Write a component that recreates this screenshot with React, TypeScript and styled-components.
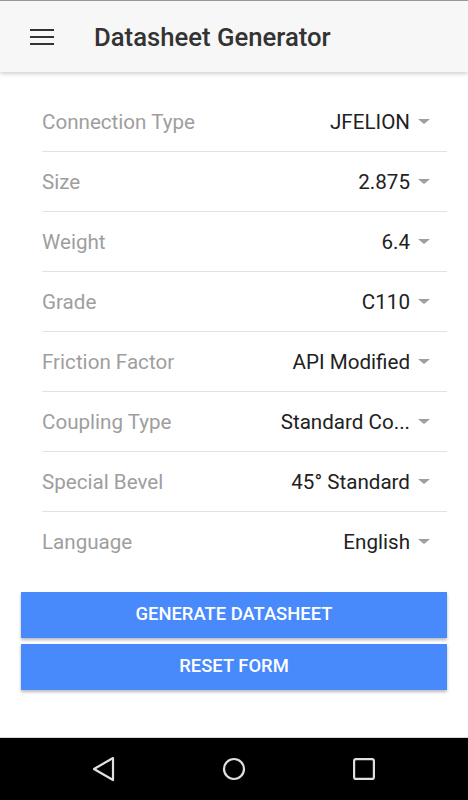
import styled, { createGlobalStyle } from "styled-components";

const Global = createGlobalStyle`
  html, body {
    margin: 0;
    padding: 0;
    background: #fff;
    font-family: Roboto, "Noto Sans", sans-serif;
  }
`;

const Screen = styled.div`
  display: flex;
  flex-direction: column;
  height: 100vh;
  border-top: 1px solid #9a9a9a;
  box-sizing: border-box;
`;

const AppBar = styled.header`
  display: flex;
  align-items: center;
  gap: 40px;
  height: 71px;
  padding-left: 30px;
  background: #f7f7f7;
  box-shadow: 0 2px 4px rgba(0, 0, 0, 0.18);
  position: relative;
  z-index: 1;
`;

const Title = styled.h1`
  margin: 0;
  font-size: 25.7px;
  font-weight: 500;
  color: #333;
`;

const Content = styled.main`
  flex: 1;
  padding: 20px 21px 0;
`;

const Form = styled.div`
  display: flex;
  flex-direction: column;
  padding-left: 21px;
`;

const Field = styled.div<{ $last?: boolean }>`
  display: flex;
  align-items: center;
  justify-content: space-between;
  height: 59px;
  border-bottom: 1px solid ${(p) => (p.$last ? "transparent" : "#e2e2e2")};
`;

const Label = styled.span`
  font-size: 20.6px;
  color: #9e9e9e;
`;

const Select = styled.span`
  display: flex;
  align-items: center;
  gap: 8px;
  padding-right: 17px;
  font-size: 20.6px;
  color: #212121;
`;

const Caret = styled.span`
  width: 0;
  height: 0;
  border-left: 6px solid transparent;
  border-right: 6px solid transparent;
  border-top: 5px solid #9e9e9e;
`;

const Actions = styled.div`
  display: flex;
  flex-direction: column;
  gap: 6px;
  margin-top: 20px;
`;

const Button = styled.button`
  height: 46px;
  padding: 0 0 3px;
  border: none;
  background: #4889fc;
  color: #fff;
  font-family: Roboto, sans-serif;
  font-size: 18.4px;
  font-weight: 500;
  text-transform: uppercase;
  box-shadow: 0 2px 3px rgba(0, 0, 0, 0.28);
`;

const NavBar = styled.nav`
  display: grid;
  grid-template-columns: repeat(3, 130px);
  justify-content: center;
  justify-items: center;
  align-items: center;
  height: 62px;
  background: #000;
  border-top: 1px solid #d6d6d6;
`;

const fields = [
  ["Connection Type", "JFELION"],
  ["Size", "2.875"],
  ["Weight", "6.4"],
  ["Grade", "C110"],
  ["Friction Factor", "API Modified"],
  ["Coupling Type", "Standard Co..."],
  ["Special Bevel", "45° Standard"],
  ["Language", "English"],
];

function Menu() {
  return (
    <svg width="24" height="18" viewBox="0 0 24 18">
      <path d="M0 2h24M0 9h24M0 16h24" stroke="#333" strokeWidth="2" />
    </svg>
  );
}

export default function App() {
  return (
    <Screen>
      <Global />
      <AppBar>
        <Menu />
        <Title>Datasheet Generator</Title>
      </AppBar>
      <Content>
        <Form>
          {fields.map(([label, value], i) => (
            <Field key={label} $last={i === fields.length - 1}>
              <Label>{label}</Label>
              <Select>
                {value}
                <Caret />
              </Select>
            </Field>
          ))}
        </Form>
        <Actions>
          <Button>Generate Datasheet</Button>
          <Button>Reset Form</Button>
        </Actions>
      </Content>
      <NavBar>
        <svg width="24" height="26" viewBox="0 0 24 26">
          <path d="M21 2L2 13l19 11z" fill="none" stroke="#e0e0e0" strokeWidth="2.2" strokeLinejoin="round" />
        </svg>
        <svg width="24" height="24" viewBox="0 0 24 24">
          <circle cx="12" cy="12" r="10" fill="none" stroke="#e0e0e0" strokeWidth="2.2" />
        </svg>
        <svg width="22" height="22" viewBox="0 0 22 22">
          <rect x="1.1" y="1.1" width="19.8" height="19.8" rx="2" fill="none" stroke="#e0e0e0" strokeWidth="2.2" />
        </svg>
      </NavBar>
    </Screen>
  );
}
